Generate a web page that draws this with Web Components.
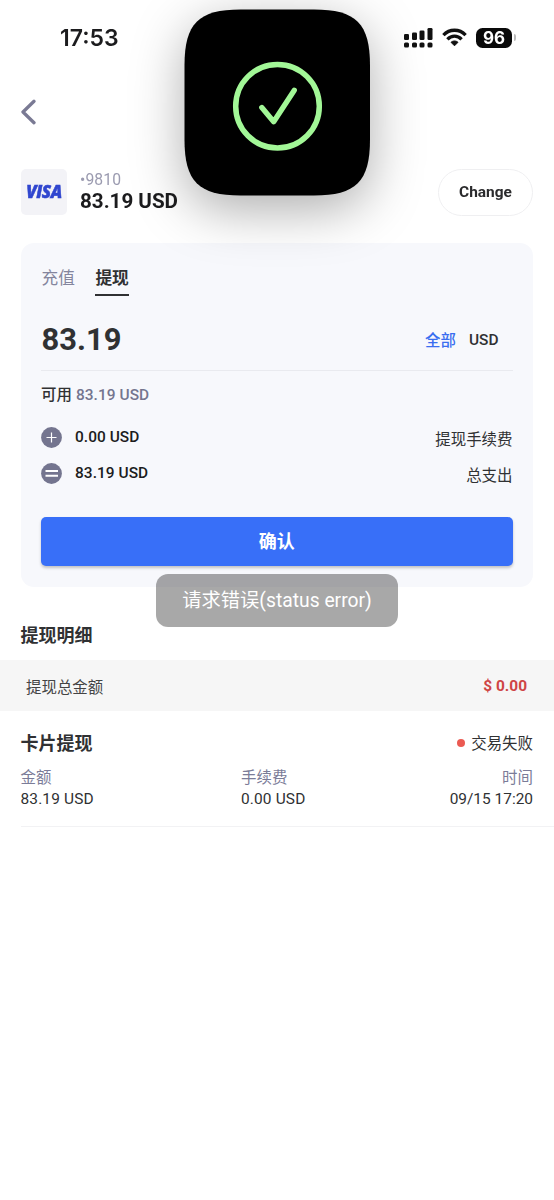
<!DOCTYPE html>
<html lang="zh-CN">
<head>
<meta charset="utf-8">
<title>提现</title>
<style>
html{background:#fff}
body{margin:0;width:554px;height:1200px;overflow:hidden;position:relative;font-family:Roboto,"Noto Sans CJK SC",sans-serif;font-size:15.45px;color:#303133}
</style>
</head>
<body>
<withdraw-page></withdraw-page>
<script>
const define = (name, html) => {
  const t = document.createElement('template');
  t.innerHTML = html;
  customElements.define(name, class extends HTMLElement {
    constructor() {
      super();
      this.attachShadow({ mode: 'open' }).appendChild(t.content.cloneNode(true));
    }
  });
};

define('status-bar', `
<style>
:host{display:flex;justify-content:space-between;align-items:center;height:74px;box-sizing:border-box;padding:1px 38px 0 60px;font:600 23px Inter,sans-serif;color:#1c1c1e;filter:blur(.7px)}
.icons{display:flex;align-items:center}
svg{display:block}
.bat{display:flex;align-items:center;justify-content:center;width:36px;height:20px;border-radius:6.5px;background:#0a0a0a;color:#fff;font:700 17px/20px Inter,sans-serif;margin-left:9px}
.cap{width:2.5px;height:7px;border-radius:0 3px 3px 0;background:#bbb;margin-left:1.5px}
</style>
<span>17:53</span>
<div class="icons">
<svg width="30" height="22" viewBox="0 0 30 22" fill="#111"><rect x="1" y="7" width="5" height="6" rx="1.3"/><rect x="9" y="5.500" width="5" height="7.500" rx="1.3"/><rect x="16.500" y="3.500" width="5" height="9.500" rx="1.300"/><rect x="24.500" y="1" width="5" height="12" rx="1.3"/><rect x="1" y="15.500" width="5" height="5" rx="1.5"/><rect x="9" y="15.500" width="5" height="5" rx="1.5"/><rect x="16.500" y="15.500" width="5" height="5" rx="1.5"/><rect x="24.500" y="15.500" width="5" height="5" rx="1.5"/></svg>
<svg style="margin-left:9px" width="25" height="19" viewBox="0 0 25 19" fill="none" stroke="#111" stroke-width="3.300"><path d="M1.400 7.200C7.500.6 17.500.6 23.600 7.200M5.400 11.300c4-4.200 10.200-4.200 14.200 0"/><path d="M12.500 17.800 9 14.300c2-1.800 5-1.800 7 0z" fill="#111" stroke-width="1"/></svg>
<div class="bat"><span>96</span></div><i class="cap"></i>
</div>`);

define('nav-back', `
<style>:host{display:flex;align-items:center;height:76px;padding-left:20px;filter:blur(.6px)}svg{display:block}</style>
<svg width="17" height="26" viewBox="0 0 17 26" fill="none" stroke="#7a7a94" stroke-width="3.300" stroke-linecap="round" stroke-linejoin="round"><path d="M14 2.300 3 13l11 10.700"/></svg>`);

define('account-row', `
<style>
:host{display:flex;align-items:center;margin-top:19px;height:46px;padding:0 21px;filter:blur(.6px)}
.logo{width:46px;height:46px;border-radius:5px;background:#f3f3f7;display:flex;align-items:center;justify-content:center;color:#3046cf;font:italic 800 17px/46px "Open Sans",sans-serif;letter-spacing:-.5px;-webkit-text-stroke:.5px #3046cf}
.info{margin-left:13px;flex:1;margin-top:-2px}
.num{font-size:15.7px;line-height:20px;color:#9b9bb0;letter-spacing:.1px}
.bal{font-size:20.6px;font-weight:700;line-height:22px;color:#1c1c1e}
.btn{box-sizing:border-box;width:95px;height:47px;border:1.500px solid #efeff1;border-radius:24px;text-align:center;font-weight:700;font-size:15.45px;line-height:44px;color:#2a2a2c}
</style>
<div class="logo"><span>VISA</span></div>
<div class="info"><div class="num">•9810</div><div class="bal">83.19 USD</div></div>
<div class="btn"><slot></slot></div>`);

define('tab-item', `
<style>:host{display:block;font-size:16.7px;line-height:28px;height:39px;color:#84859d;box-sizing:border-box;padding-top:5.600px}
:host([active]){color:#303133;font-weight:700;border-bottom:2.500px solid #303133;height:34px;padding-top:2.600px;margin-top:3px}</style><slot></slot>`);

define('fee-row', `
<style>:host{display:flex;align-items:center;height:36px}
svg{display:block;margin-right:13px}
.v{font-weight:500;color:#1c1c20;flex:1;letter-spacing:.05px}
.v,.l{display:block}
.v{padding-bottom:1px}
.eq{display:none}:host([kind=eq]) .eq{display:inline}:host([kind=eq]) .pl{display:none}</style>
<svg width="21" height="21" viewBox="0 0 21 21"><circle cx="10.500" cy="10.500" r="10.400" fill="#74758f"/><path class="pl" d="M5.500 10.500h10M10.500 5.500v10" stroke="#fff" stroke-width="1.200"/><path class="eq" d="M4.500 8h12.500M4.500 12.800h12.500" stroke="#fff" stroke-width="2"/></svg>
<span class="v"><slot name="value"></slot></span><span class="l"><slot></slot></span>`);

define('withdraw-card', `
<style>
:host{display:block;box-sizing:border-box;margin:28.400px 21px 0;height:343.600px;border-radius:13px;background:#f7f8fc;padding:16px 20.500px 0 20px}
.tabs{display:flex;gap:20.500px;height:39px;padding-left:.5px}
.amt{display:flex;align-items:center;height:71.600px;border-bottom:1px solid #e9eaef}
.n{font-size:30.9px;font-weight:700;flex:1;padding:11px 0 0 .5px}
.all{color:#3a6ef0;font-weight:500;margin-right:13px;padding-top:10.500px}
.u{font-weight:500;margin-right:14px;padding-top:12px}
.av{height:48px;line-height:48.600px;font-weight:500;letter-spacing:.06px}
.av b{font-weight:500;color:#74758f}
fee-row:first-of-type{margin-top:.8px}
.go{margin-top:25.600px;height:49px;border-radius:5px;background:#386ff8;box-shadow:0 2px 3px rgba(0,0,0,.22);color:#fff;font-size:18px;font-weight:700;line-height:50px;text-align:center}
</style>
<div class="tabs"><tab-item>充值</tab-item><tab-item active>提现</tab-item></div>
<div class="amt"><span class="n">83.19</span><span class="all">全部</span><span class="u">USD</span></div>
<div class="av">可用 <b>83.19 USD</b></div>
<fee-row><span slot="value">0.00 USD</span>提现手续费</fee-row>
<fee-row kind="eq"><span slot="value">83.19 USD</span>总支出</fee-row>
<div class="go">确认</div>`);

define('total-band', `
<style>:host{display:flex;justify-content:space-between;align-items:center;height:51px;padding:0 27px 0 26px;background:#f6f6f6}
b{font-weight:700;color:#cf4545;font-size:15.45px;padding-top:1.500px}span{color:#444;padding-top:1px}</style>
<span><slot></slot></span><b><slot name="total"></slot></b>`);

define('record-item', `
<style>
:host{display:block;margin-left:20.500px;padding:17px 21px 0 0;height:98.500px;border-bottom:1.500px solid #f2f2f4}
.h{display:flex;justify-content:space-between;align-items:center;height:28px}
.t{font-size:18px;font-weight:700;color:#303133}
.s{display:flex;align-items:center;gap:6.500px}
.s i{width:8px;height:8px;margin-top:2px;border-radius:50%;background:#eb5a52}
.g{display:grid;grid-template-columns:220.500px 1fr auto;line-height:22px;margin-top:10.600px}
.k{color:#7b7c98}.r{text-align:right}.m{letter-spacing:.15px}
.g span:nth-child(n+4){margin-top:-.8px}
</style>
<div class="h"><span class="t">卡片提现</span><span class="s"><i></i><span>交易失败</span></span></div>
<div class="g"><span class="k">金额</span><span class="k">手续费</span><span class="k r">时间</span><span class="m">83.19 USD</span><span class="m">0.00 USD</span><span class="r">09/15 17:20</span></div>`);

define('success-island', `
<style>:host{position:absolute;left:184px;top:9px;width:187px;height:187px;filter:drop-shadow(0 14px 26px rgba(0,0,0,.32))}svg{display:block;overflow:visible}</style>
<svg width="187" height="187" viewBox="-.5 -.5 187 187" fill="none"><path d="M0 56C0 14 14 0 56 0H129.500C171.500 0 185.500 14 185.500 56V130C185.500 172 171.500 186 129.500 186H56C14 186 0 172 0 130Z" fill="#000"/><circle cx="93" cy="96.700" r="41.800" stroke="#a2f797" stroke-width="5.500"/><path d="M77.300 98 89.200 112.300 109.800 80.700" stroke="#a2f797" stroke-width="5.300" stroke-linecap="round" stroke-linejoin="round"/></svg>`);

define('toast-message', `
<style>:host{position:absolute;left:156px;top:574px;width:242px;height:52.500px;border-radius:12px;background:rgba(0,0,0,.34);color:#fff;font-size:19.3px;line-height:54px;text-align:center;white-space:nowrap}</style><slot></slot>`);

define('withdraw-page', `
<style>
:host{display:block;height:1200px}
h2{margin:0;height:73px;padding-left:20.500px;font-size:18px;font-weight:700;line-height:98px;color:#303133}
</style>
<status-bar></status-bar>
<nav-back></nav-back>
<account-row>Change</account-row>
<withdraw-card></withdraw-card>
<h2>提现明细</h2>
<total-band>提现总金额<span slot="total">$ 0.00</span></total-band>
<record-item></record-item>
<success-island></success-island>
<toast-message>请求错误(status error)</toast-message>`);
</script>
</body>
</html>
